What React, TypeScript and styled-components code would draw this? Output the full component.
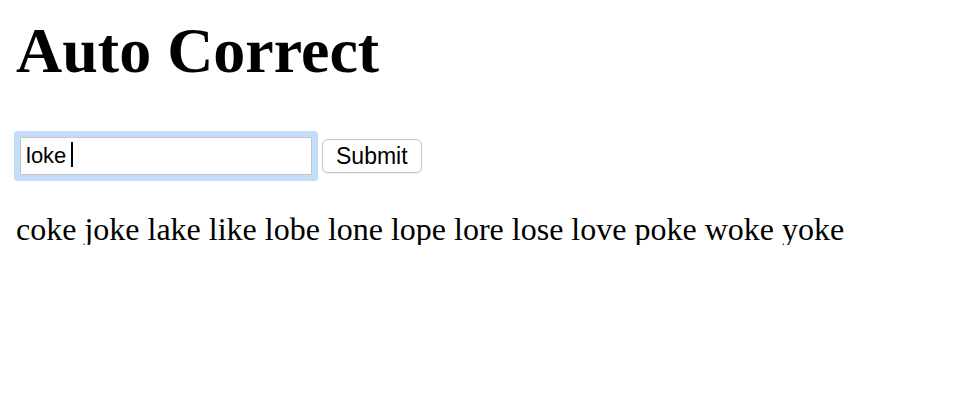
import React from "react";
import styled, { createGlobalStyle } from "styled-components";

const GlobalStyle = createGlobalStyle`
  html, body {
    margin: 0;
    padding: 0;
    background: #ffffff;
    color: #000000;
  }
`;

const Page = styled.div`
  padding: 0 16px;
  font-family: "Liberation Serif", "Times New Roman", serif;
`;

const Title = styled.h1`
  margin: 19px 0 54px 0;
  font-size: 64px;
  line-height: 64px;
  font-weight: 700;
`;

const Form = styled.form`
  display: flex;
  align-items: center;
  gap: 10px;
  margin: 0 0 38px 4px;
`;

const Field = styled.div`
  position: relative;
  display: flex;
`;

const Input = styled.input`
  box-sizing: border-box;
  width: 292px;
  height: 38px;
  padding: 0 5px;
  border: 1px solid #c4c4c4;
  border-radius: 0;
  font-family: "Liberation Sans", Arial, sans-serif;
  font-size: 22px;
  color: #000;
  background: #fff;
  caret-color: transparent;
  outline: none;
  box-shadow: 0 0 0 6px #c2dcf9;
  border-radius: 1px;
`;

const Caret = styled.span`
  position: absolute;
  left: 51px;
  top: 5px;
  width: 2px;
  height: 25px;
  background: #000;
  pointer-events: none;
`;

const Button = styled.button`
  box-sizing: border-box;
  height: 34px;
  padding: 0 13px;
  border: 1px solid #c6c6c6;
  border-radius: 6px;
  background: #ffffff;
  box-shadow: 0 1px 1px rgba(0, 0, 0, 0.08);
  font-family: "Liberation Sans", Arial, sans-serif;
  font-size: 23px;
  color: #000;
  cursor: pointer;
`;

const Results = styled.p`
  margin: 0;
  font-size: 32px;
  line-height: 32px;
`;

const words = [
  "coke", "joke", "lake", "like", "lobe", "lone", "lope",
  "lore", "lose", "love", "poke", "woke", "yoke",
];

export default function App() {
  const [value, setValue] = React.useState("loke");
  return (
    <>
      <GlobalStyle />
      <Page>
        <Title>Auto Correct</Title>
        <Form onSubmit={(e) => e.preventDefault()}>
          <Field>
            <Input value={value} onChange={(e) => setValue(e.target.value)} />
            <Caret />
          </Field>
          <Button type="submit">Submit</Button>
        </Form>
        <Results>{words.join(" ")}</Results>
      </Page>
    </>
  );
}
